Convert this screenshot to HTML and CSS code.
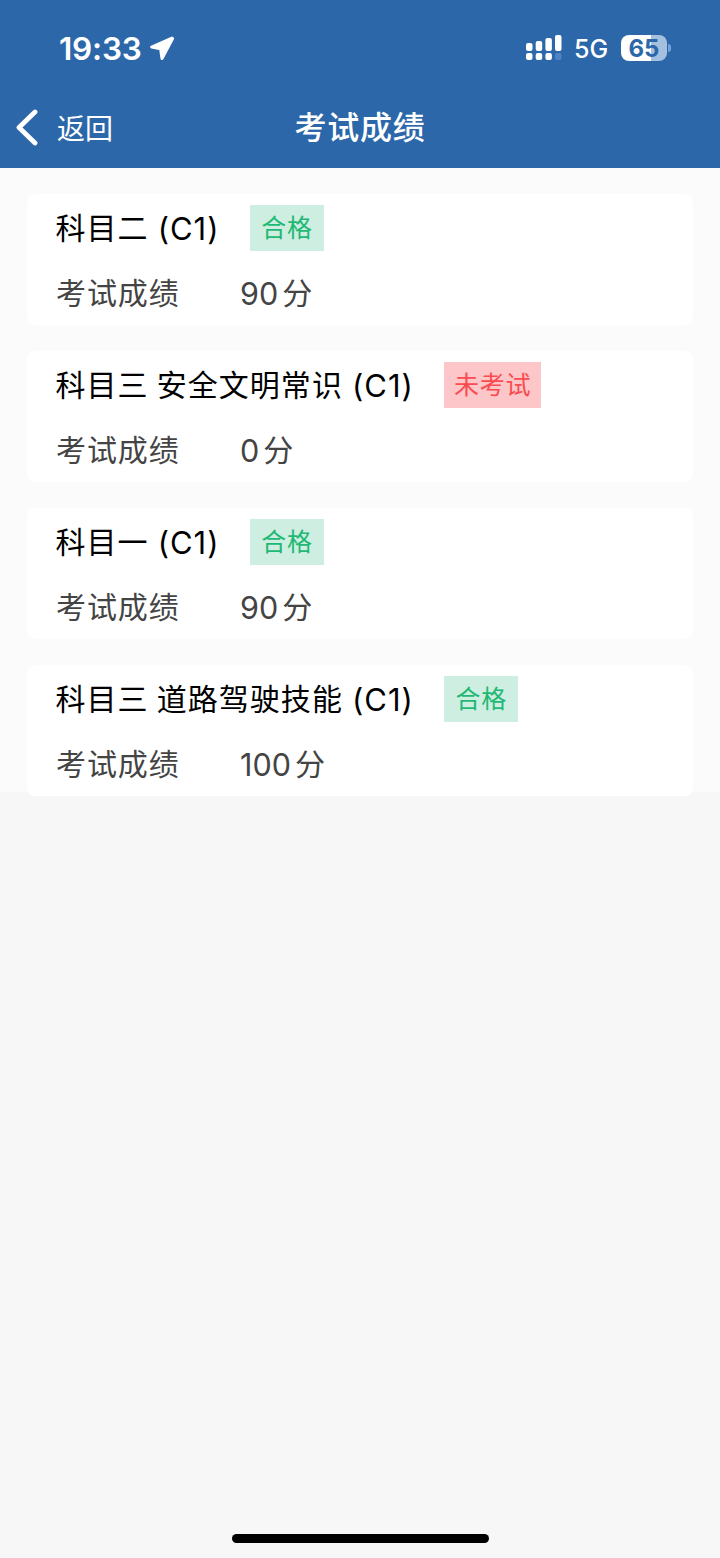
FILE: index.html
```html
<!DOCTYPE html>
<html lang="zh-CN">
<head>
<meta charset="utf-8">
<title>考试成绩</title>
<link rel="stylesheet" href="styles.css">
</head>
<body>
<header class="header">
  <div class="status">
    <span class="time">19:33</span>
    <svg class="location" width="26" height="26" viewBox="0 0 26 26"><path d="M23 3 L2.600 12 L11.600 13.900 L13 23.600 L23.600 3.600Z" fill="#fff" stroke="#fff" stroke-width="3" stroke-linejoin="round"/></svg>
    <svg class="signal" width="38" height="28" viewBox="0 0 38 28" fill="#fff">
      <rect x="1" y="9" width="6.500" height="8" rx="2"/><rect x="10.700" y="7" width="6.500" height="10" rx="2"/><rect x="20.400" y="4" width="6.500" height="13" rx="2"/><rect x="30" y="1" width="6.500" height="16" rx="2"/>
      <rect x="1" y="19" width="6.500" height="7" rx="2"/><rect x="10.700" y="19" width="6.500" height="7" rx="2"/><rect x="20.400" y="19" width="6.500" height="7" rx="2"/><rect x="30" y="19" width="6.500" height="7" rx="2" fill="#4d82c4"/>
    </svg>
    <span class="network">5G</span>
    <span class="battery">65</span>
    <span class="battery-tip"></span>
  </div>
  <nav class="nav">
    <a class="back">
      <svg width="24" height="38" viewBox="0 0 24 38"><path d="M20 3 L4 18.500 L20 34" fill="none" stroke="#fff" stroke-width="4.800" stroke-linecap="round" stroke-linejoin="round"/></svg>
      <span class="back-text">返回</span>
    </a>
    <h1 class="title">考试成绩</h1>
  </nav>
</header>
<main class="results">
  <section class="card">
    <div class="subject"><span class="name">科目二</span><span class="grade">(C1)</span><span class="badge pass">合格</span></div>
    <div class="score"><span class="label">考试成绩</span><span class="num">90</span><span class="unit">分</span></div>
  </section>
  <section class="card">
    <div class="subject"><span class="name">科目三 安全文明常识</span><span class="grade">(C1)</span><span class="badge pending">未考试</span></div>
    <div class="score"><span class="label">考试成绩</span><span class="num">0</span><span class="unit">分</span></div>
  </section>
  <section class="card">
    <div class="subject"><span class="name">科目一</span><span class="grade">(C1)</span><span class="badge pass">合格</span></div>
    <div class="score"><span class="label">考试成绩</span><span class="num">90</span><span class="unit">分</span></div>
  </section>
  <section class="card">
    <div class="subject"><span class="name">科目三 道路驾驶技能</span><span class="grade">(C1)</span><span class="badge pass">合格</span></div>
    <div class="score"><span class="label">考试成绩</span><span class="num">100</span><span class="unit">分</span></div>
  </section>
</main>
<div class="home-indicator"></div>
</body>
</html>
```
FILE: styles.css
```css
* { box-sizing: border-box; }
body {
  margin: 0;
  height: 1558px;
  display: flex;
  flex-direction: column;
  background: #f7f7f7;
  font-family: Inter, "Noto Sans CJK SC", sans-serif;
  color: #000;
}
.header { height: 168px; background: #2c67aa; color: #fff; }
.status { height: 88px; padding: 8px 49px 0 59px; display: flex; align-items: center; }
.time { width: 90px; padding-top: 2px; font-size: 31.5px; font-weight: 600; line-height: 40px; letter-spacing: -0.2px; }
.signal { margin-left: auto; }
.network { width: 34px; margin-left: 11px; padding-top: 2px; font-size: 25px; font-weight: 500; line-height: 30px; }
.battery {
  width: 46px;
  height: 26px;
  margin-left: 13px;
  border-radius: 8px;
  background: linear-gradient(90deg, #fff 65%, #a5bfdf 65%);
  color: #2c67aa;
  font-size: 24px;
  font-weight: 700;
  line-height: 27px;
  text-align: center;
}
.battery-tip { width: 3px; height: 8px; margin-left: 1px; border-radius: 0 3px 3px 0; background: #6fa3df; }
.nav { height: 80px; display: grid; grid-template-columns: 1fr auto 1fr; align-items: center; }
.back { display: flex; align-items: center; gap: 18px; padding-left: 15px; font-size: 28px; line-height: 40px; }
.back-text { padding-top: 2px; }
.title { margin: 0; font-size: 32px; font-weight: 500; line-height: 44px; letter-spacing: 0.8px; }
.results { height: 624px; padding: 26px 27px 0; display: flex; flex-direction: column; gap: 26px; background: #fbfbfb; }
.card { flex: none; height: 131px; padding: 11px 29px 0; border-radius: 8px; background: #fff; }
.subject, .score { display: flex; align-items: center; font-size: 30px; letter-spacing: 0.9px; white-space: pre; }
.subject { height: 46px; }
.name, .label, .unit { padding-bottom: 5px; }
.name { margin-left: -0.5px; letter-spacing: 1.05px; word-spacing: -1.5px; }
.grade { width: 60px; margin-left: 9px; font-size: 31px; letter-spacing: 1px; }
.badge { height: 46px; margin-left: 32.5px; padding: 0 11px; font-size: 25px; line-height: 46px; letter-spacing: 0.8px; }
.pass { background: #cdeee0; color: #1fb874; }
.pending { background: #fdc6c8; color: #fa4b50; padding: 0 9.5px; }
.score { height: 44px; margin-top: 20px; color: #444; }
.label { width: 184px; }
.num { margin-right: 4px; font-size: 30.5px; letter-spacing: 0; }
.home-indicator { width: 257px; height: 9px; margin: auto auto 15px 232px; border-radius: 5px; background: #000; }
```
